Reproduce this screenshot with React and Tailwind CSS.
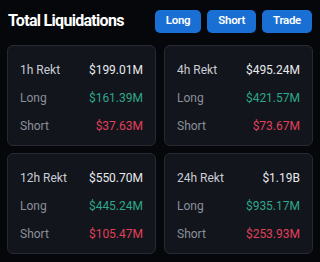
import React from "react";

const stats = [
  { label: "1h Rekt", total: "$199.01M", long: "$161.39M", short: "$37.63M" },
  { label: "4h Rekt", total: "$495.24M", long: "$421.57M", short: "$73.67M" },
  { label: "12h Rekt", total: "$550.70M", long: "$445.24M", short: "$105.47M" },
  { label: "24h Rekt", total: "$1.19B", long: "$935.17M", short: "$253.93M" },
];

function Row({ label, value, valueClass, labelClass }) {
  return (
    <div className="flex items-center justify-between leading-4">
      <span className={labelClass}>{label}</span>
      <span className={valueClass}>{value}</span>
    </div>
  );
}

export default function App() {
  return (
    <div className="w-[320px] h-[262px] bg-[#05070b] px-[7px] font-['Roboto',sans-serif]">
      <div className="flex items-center justify-between h-[45px] pb-[3px]">
        <h1 className="pl-[1px] whitespace-nowrap text-[16px] font-bold text-white tracking-[-0.7px]">Total Liquidations</h1>
        <div className="flex shrink-0 gap-[6px] pr-[1px]">
          {["Long", "Short", "Trade"].map((b) => (
            <button
              key={b}
              className="h-[23px] px-[11px] rounded-[5px] bg-[#1a6fd4] text-white text-[11.5px] font-semibold tracking-[-0.3px]"
            >
              {b}
            </button>
          ))}
        </div>
      </div>
      <div className="grid grid-cols-2 gap-x-[8px] gap-y-[7px]">
        {stats.map((s) => (
          <div
            key={s.label}
            className="h-[101px] rounded-[6px] border border-[#262a33] bg-[#12151c] px-[12px] pt-[16px] flex flex-col gap-[12px] text-[12px]"
          >
            <Row label={s.label} value={s.total} labelClass="text-[#c9ccd3]" valueClass="text-[#e8eaee]" />
            <Row label="Long" value={s.long} labelClass="text-[#8b909a]" valueClass="text-[#2ea78a]" />
            <Row label="Short" value={s.short} labelClass="text-[#8b909a]" valueClass="text-[#e0405a]" />
          </div>
        ))}
      </div>
    </div>
  );
}
